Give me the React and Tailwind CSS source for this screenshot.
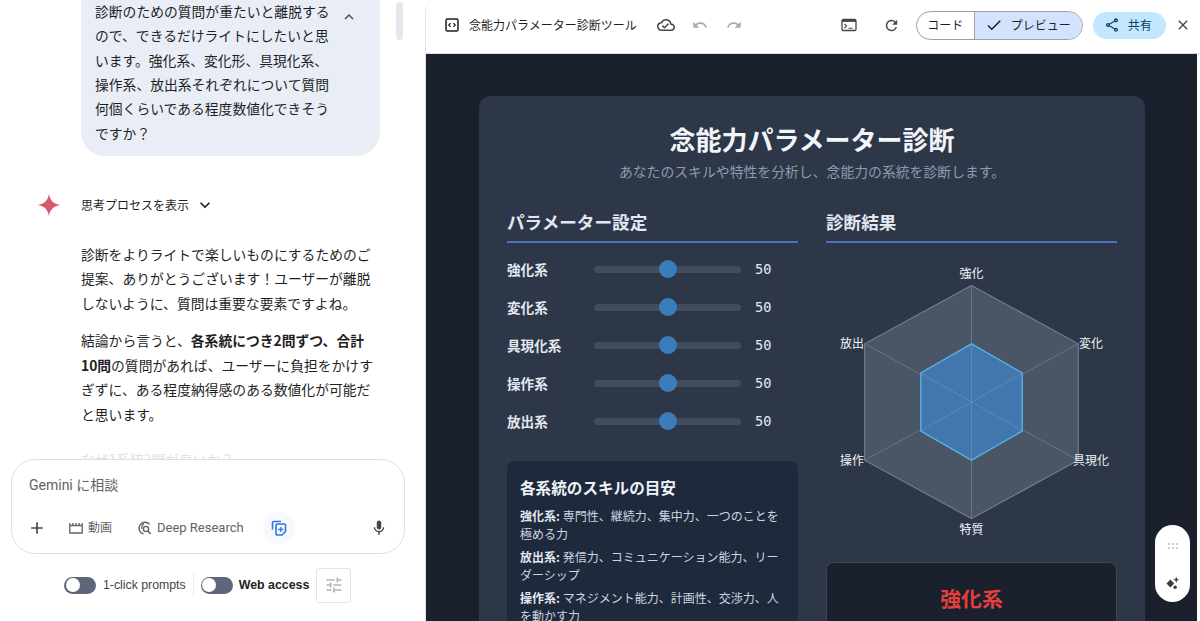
import React from "react";
import { MdAdd, MdMic, MdOutlineCloudDone, MdUndo, MdRedo, MdRefresh, MdCheck, MdOutlineShare, MdClose, MdTune, MdKeyboardArrowDown, MdKeyboardArrowUp } from "react-icons/md";

const JP = "font-['Noto_Sans_CJK_JP','Noto_Sans',sans-serif]";

function CodeBox() {
  return (
    <svg width="14" height="14" viewBox="0 0 14 14" fill="none" stroke="#1f1f1f" strokeWidth="1.5">
      <rect x="1" y="1" width="12" height="12" rx="1.5" />
      <path d="M5.6 5.2 3.8 7l1.8 1.8M8.4 5.2 10.2 7 8.4 8.8" strokeWidth="1.2" />
    </svg>
  );
}
function TerminalIcon() {
  return (
    <svg width="16" height="14" viewBox="0 0 16 14" fill="none" stroke="#444746" strokeWidth="1.3">
      <rect x="1" y="1.5" width="14" height="11" rx="1.2" />
      <rect x="1" y="1.5" width="14" height="2.4" fill="#444746" stroke="none" />
      <path d="M3.5 6 5.5 8 3.5 10M7.5 10.2h4" strokeWidth="1.1" />
    </svg>
  );
}
function Spark() {
  return (
    <svg width="24" height="24" viewBox="0 0 24 24">
      <path d="M12 0.5C12.8 7.2 16.5 11.2 23.5 12 16.5 12.8 12.8 16.8 12 23.5 11.2 16.8 7.5 12.8 0.5 12 7.5 11.2 11.2 7.2 12 0.5Z" fill="#d8596e" />
    </svg>
  );
}
function FilmIcon() {
  return (
    <svg width="14" height="12" viewBox="0 0 14 12" fill="none" stroke="#5f6368" strokeWidth="1.3">
      <path d="M0.8 3.5h12.4v7.5H0.8zM0.8 1v2.5M3.8 1v2.5M7 1v2.5M10.2 1v2.5M13.2 1v2.5" />
    </svg>
  );
}
function ResearchIcon() {
  return (
    <svg width="15" height="15" viewBox="0 0 15 15" fill="none" stroke="#5f6368" strokeWidth="1.4">
      <path d="M12.5 3.2A6 6 0 1 0 6.5 13" />
      <circle cx="9" cy="8" r="2.6" />
      <path d="m11 10 2.8 3" />
      <path d="M7 2.5C5.5 3.5 4.5 5.5 4.8 8" strokeWidth="1.1" />
    </svg>
  );
}
function CanvasIcon() {
  return (
    <svg width="16" height="16" viewBox="0 0 16 16" fill="none" stroke="#3578e0" strokeWidth="1.6">
      <path d="M1.5 9.5V3a1.5 1.5 0 0 1 1.5-1.5h7" />
      <path d="M5 5.2A1.2 1.2 0 0 1 6.2 4h7.1a1.2 1.2 0 0 1 1.2 1.2v6.3L11 15H6.2A1.2 1.2 0 0 1 5 13.8z" />
      <path d="M9.8 7v5M7.3 9.5h5" strokeWidth="1.3" />
    </svg>
  );
}
function GemSpark() {
  return (
    <svg width="15" height="15" viewBox="0 0 14 14" fill="#3c3c3c">
      <path d="M5 3.2 8.6 7 5 10.8 1.4 7z" />
      <path d="M10.5 0.5 11.3 2.7 13.5 3.5 11.3 4.3 10.5 6.5 9.7 4.3 7.5 3.5 9.7 2.7z" />
      <circle cx="9.5" cy="10.5" r="1.6" />
    </svg>
  );
}
function Dots() {
  return (
    <svg width="12" height="8" viewBox="0 0 12 8" fill="#cfcfcf">
      {[1, 5, 9].map((x) => [1, 5].map((y) => <rect key={x + "-" + y} x={x} y={y} width="2" height="2" />))}
    </svg>
  );
}

function Toggle() {
  return (
    <span className="flex h-[17px] w-[32px] items-center rounded-full bg-[#5f6679] pl-[1.5px]">
      <span className="h-[14px] w-[14px] rounded-full bg-white" />
    </span>
  );
}

function SliderRow({ label }) {
  return (
    <div className="flex h-[38px] items-center">
      <span className="w-[87px] text-[13.6px] font-bold text-[#e2e8f0]">{label}</span>
      <input
        type="range"
        defaultValue={50}
        readOnly
        className="h-[7px] w-[147px] cursor-pointer appearance-none rounded-full bg-[#414c5e] [&::-webkit-slider-thumb]:h-[18px] [&::-webkit-slider-thumb]:w-[18px] [&::-webkit-slider-thumb]:appearance-none [&::-webkit-slider-thumb]:rounded-full [&::-webkit-slider-thumb]:bg-[#3b7dba]"
      />
      <span className="ml-[14px] font-['DejaVu_Sans_Mono',monospace] text-[13.6px] text-[#e2e8f0]">50</span>
    </div>
  );
}

function Radar() {
  const c = [145.5, 147];
  const pt = (i, r, w) => {
    const a = (Math.PI / 3) * i - Math.PI / 2;
    return [c[0] + (w * Math.cos(a)) / Math.cos(Math.PI / 6), c[1] + r * Math.sin(a)];
  };
  const idx = [0, 1, 2, 3, 4, 5];
  const pts = (r, w) => idx.map((i) => pt(i, r, w).join(",")).join(" ");
  const labels = [
    ["強化", 145.5, 17],
    ["変化", 265, 87],
    ["具現化", 265, 204],
    ["特質", 145.5, 273],
    ["操作", 26, 204],
    ["放出", 26, 87],
  ];
  return (
    <svg width="291" height="290" viewBox="0 0 291 290" className="block">
      <polygon points={pts(116.5, 106.8)} fill="#4a5565" stroke="#737c8a" strokeWidth="1.2" />
      {idx.map((i) => {
        const [x, y] = pt(i, 116.5, 106.8);
        return <line key={i} x1={c[0]} y1={c[1]} x2={x} y2={y} stroke="#697382" strokeWidth="1" />;
      })}
      <polygon points={pts(58.2, 50.7)} fill="#3f7fbc" fillOpacity="0.82" stroke="#5aaee6" strokeWidth="1.4" />
      {idx.map((i) => {
        const [x, y] = pt(i, 57, 50);
        return <line key={"i" + i} x1={c[0]} y1={c[1]} x2={x} y2={y} stroke="#6d9cc6" strokeOpacity="0.45" strokeWidth="1" />;
      })}
      {labels.map(([t, x, y]) => (
        <text key={t} x={x} y={y} textAnchor="middle" dominantBaseline="central" fill="#f1f4f8" fontSize="12" fontFamily="'Noto Sans CJK JP',sans-serif">
          {t}
        </text>
      ))}
    </svg>
  );
}

function Skill({ name, children }) {
  return (
    <p className="mb-[5px] text-[12px] leading-[18px] text-[#cbd5e0]">
      <b className="font-bold text-[#e2e8f0]">{name}:</b> {children}
    </p>
  );
}

function ToolButton({ icon, label, size }) {
  return (
    <span className={`flex items-center gap-[5px] text-[#5f6368] ${size}`}>
      {icon}
      {label}
    </span>
  );
}

export default function App() {
  return (
    <div className={`flex h-[621px] w-[1200px] overflow-hidden bg-white ${JP}`}>
      <aside className="relative flex w-[425px] shrink-0 flex-col">
        <div className="h-[459px] shrink-0 overflow-hidden pl-[81px] text-[13.8px] text-[#1f1f1f]">
          <div className="-mt-px flex w-[299px] justify-between rounded-b-[24px] bg-[#e9eef6] pb-[11px] pl-[14px] pr-[22px] leading-[24.33px]">
            <p>
              診断のための質問が重たいと離脱する
              <br />
              ので、できるだけライトにしたいと思
              <br />
              います。強化系、変化形、具現化系、
              <br />
              操作系、放出系それぞれについて質問
              <br />
              何個くらいである程度数値化できそう
              <br />
              ですか？
            </p>
            <MdKeyboardArrowUp size={18} className="mt-[9px] shrink-0 text-[#444746]" />
          </div>
          <div className="mt-[37px] flex h-[24px] items-center text-[12px]">
            <span className="-ml-[44px] mr-[20px]">
              <Spark />
            </span>
            思考プロセスを表示
            <MdKeyboardArrowDown size={20} className="ml-[6px]" />
          </div>
          <div className="mt-[25px] w-[299px] leading-[24.5px]">
            <p>診断をよりライトで楽しいものにするためのご提案、ありがとうございます！ユーザーが離脱しないように、質問は重要な要素ですよね。</p>
            <p className="mt-[13px]">
              結論から言うと、<b className="font-bold">各系統につき2問ずつ、合計10問</b>の質問があれば、ユーザーに負担をかけすぎずに、ある程度納得感のある数値化が可能だと思います。
            </p>
            <p className="mt-[21px] text-[#dfe1e4]">なぜ1系統2問が良いか？</p>
          </div>
        </div>

        <div className="mx-[11px] flex h-[95px] w-[394px] shrink-0 flex-col justify-between rounded-[24px] border border-[#dcdfe3] bg-white pb-[9px] pl-[17px] pr-[16px] pt-[14px]">
          <span className="text-[14px] leading-[22px] text-[#5f6368] font-['Roboto','Noto_Sans_CJK_JP',sans-serif]">Gemini に相談</span>
          <div className="flex items-center font-['Roboto','Noto_Sans_CJK_JP',sans-serif]">
            <MdAdd size={20} className="-ml-[2px] text-[#444746]" />
            <span className="ml-[22px]"><ToolButton icon={<FilmIcon />} label="動画" size="text-[12px]" /></span>
            <span className="ml-[25px]"><ToolButton icon={<ResearchIcon />} label="Deep Research" size="text-[13px]" /></span>
            <span className="ml-[19px] flex h-[32px] w-[32px] items-center justify-center rounded-full bg-[#f5f8fc]">
              <CanvasIcon />
            </span>
            <MdMic size={18} className="ml-auto text-[#444746]" />
          </div>
        </div>

        <div className="mt-[13px] flex h-[36px] items-center pl-[64px] font-['Liberation_Sans',sans-serif] text-[12.3px] text-[#444]">
          <Toggle />
          <span className="ml-[7px]">1-click prompts</span>
          <span className="ml-[7px] h-[24px] w-px bg-[#eeeeee]" />
          <span className="ml-[7px]"><Toggle /></span>
          <span className="ml-[6px] text-[12.4px] font-bold text-[#222]">Web access</span>
          <span className="ml-[7px] flex h-[35px] w-[35px] items-center justify-center rounded-[3px] border border-[#e3e3e3]">
            <MdTune size={20} className="text-[#b5b5b5]" />
          </span>
        </div>

        <div className="absolute right-[22px] top-[2px] h-[38px] w-[7px] rounded-full bg-[#e3e7ee]" />
      </aside>

      <main className="flex min-w-0 flex-1 flex-col overflow-hidden rounded-tl-[12px] border-l border-[#e5e7eb]">
        <header className="flex h-[54px] shrink-0 items-center border-b border-[#d9dce0] bg-white pb-[3px] text-[12px] text-[#1f1f1f]">
          <span className="ml-[19px]"><CodeBox /></span>
          <span className="ml-[10px]">念能力パラメーター診断ツール</span>
          <MdOutlineCloudDone size={18} className="ml-[20px] text-[#444746]" />
          <MdUndo size={16} className="ml-[17px] text-[#a8abaf]" />
          <MdRedo size={16} className="ml-[18px] text-[#a8abaf]" />
          <span className="ml-[99px]"><TerminalIcon /></span>
          <MdRefresh size={17} className="ml-[26px] text-[#444746]" />
          <div className="ml-[16px] flex h-[29px] w-[167px] overflow-hidden rounded-full border border-[#9aa0a6]">
            <span className="flex w-[57px] items-center justify-center">コード</span>
            <span className="flex flex-1 items-center border-l border-[#9aa0a6] bg-[#d3e3fd] pl-[10px]">
              <MdCheck size={18} />
              <span className="ml-[8px]">プレビュー</span>
            </span>
          </div>
          <span className="ml-[10px] flex h-[27px] w-[73px] items-center rounded-full bg-[#c2e7ff] pl-[11px] text-[#0b3f5f]">
            <MdOutlineShare size={16} />
            <span className="ml-[8px]">共有</span>
          </span>
          <MdClose size={16} className="ml-[9px] text-[#444746]" />
        </header>

        <div className="relative mr-[3px] flex-1 overflow-hidden bg-[#1a202c] px-[53px] pt-[42px]">
          <div className="w-[666px] rounded-t-[12px] bg-[#2d3748] px-[28px] pt-[24px]">
            <h1 className="text-center text-[26px] font-bold leading-[38px] text-[#f1f5f9]">念能力パラメーター診断</h1>
            <p className="mt-[3px] text-center text-[13.85px] leading-[20px] text-[#8f9bb0]">あなたのスキルや特性を分析し、念能力の系統を診断します。</p>
            <div className="mt-[28px] grid grid-cols-2 gap-[28px]">
              <section>
                <h2 className="border-b-2 border-[#4a72c4] pb-[6px] text-[17.6px] font-bold leading-[26px] text-[#e2e8f0]">パラメーター設定</h2>
                <div className="mt-[7px]">
                  {["強化系", "変化系", "具現化系", "操作系", "放出系"].map((l) => (
                    <SliderRow key={l} label={l} />
                  ))}
                </div>
                <div className="mt-[21px] rounded-[8px] bg-[#1e293b] pb-[20px] pl-[13px] pr-[12px] pt-[13px]">
                  <h3 className="mb-[7px] text-[15.6px] font-bold leading-[26px] text-[#edf2f7]">各系統のスキルの目安</h3>
                  <Skill name="強化系">専門性、継続力、集中力、一つのことを極める力</Skill>
                  <Skill name="放出系">発信力、コミュニケーション能力、リーダーシップ</Skill>
                  <Skill name="操作系">マネジメント能力、計画性、交渉力、人を動かす力</Skill>
                </div>
              </section>
              <section>
                <h2 className="border-b-2 border-[#4a72c4] pb-[6px] text-[17.6px] font-bold leading-[26px] text-[#e2e8f0]">診断結果</h2>
                <div className="mt-[12px]"><Radar /></div>
                <div className="mt-[17px] h-[120px] rounded-[8px] border border-[#3a4556] bg-[#1a202c] pt-[18px] text-center text-[20.8px] font-bold leading-[34px] text-[#e53e3e]">強化系</div>
              </section>
            </div>
          </div>
          <div className="absolute left-[729px] top-[471px] flex h-[77px] w-[35px] flex-col items-center justify-between rounded-full bg-white pb-[11px] pt-[17px]">
            <Dots />
            <GemSpark />
          </div>
        </div>
      </main>
    </div>
  );
}
